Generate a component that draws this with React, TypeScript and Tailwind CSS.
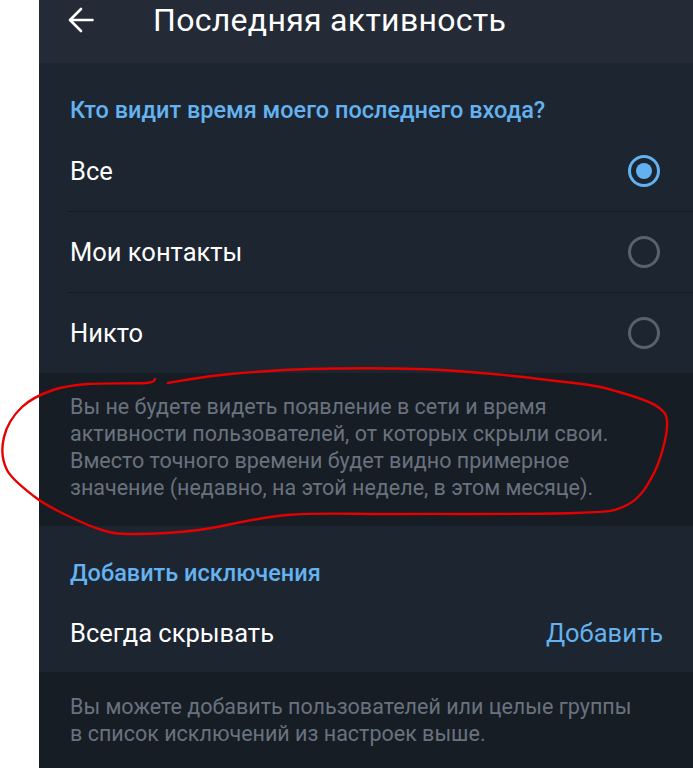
import React from 'react'

const options = [
  { label: 'Все', checked: true },
  { label: 'Мои контакты', checked: false },
  { label: 'Никто', checked: false },
]

// red hand-drawn loop around the hint text
const loop: [number, number][] = [
  [168, 383], [221, 375], [309, 369], [442, 370], [574, 383], [619, 392],
  [658, 407], [667, 427], [654, 473], [627, 505], [574, 513], [398, 514],
  [287, 515], [199, 530], [133, 534], [102, 530], [62, 513], [35, 497],
  [7, 470], [4, 437], [22, 407], [53, 390], [88, 384], [146, 383], [155, 379],
]

function smoothPath(pts: [number, number][]) {
  let d = `M${pts[0][0]},${pts[0][1]}`
  for (let i = 0; i < pts.length - 1; i++) {
    const p0 = pts[i - 1] || pts[i]
    const p1 = pts[i]
    const p2 = pts[i + 1]
    const p3 = pts[i + 2] || p2
    const c1x = p1[0] + (p2[0] - p0[0]) / 6
    const c1y = p1[1] + (p2[1] - p0[1]) / 6
    const c2x = p2[0] - (p3[0] - p1[0]) / 6
    const c2y = p2[1] - (p3[1] - p1[1]) / 6
    d += ` C${c1x},${c1y} ${c2x},${c2y} ${p2[0]},${p2[1]}`
  }
  return d
}

function Radio({ checked }: { checked: boolean }) {
  if (checked) {
    return (
      <div className="w-[32px] h-[32px] rounded-full border-[3px] border-[#62b1f0] flex items-center justify-center">
        <div className="w-[16px] h-[16px] rounded-full bg-[#62b1f0]" />
      </div>
    )
  }
  return <div className="w-[32px] h-[32px] rounded-full border-[3px] border-[#59616b]" />
}

export default function App() {
  return (
    <div
      className="relative w-[693px] h-[768px] bg-white flex overflow-hidden"
      style={{ fontFamily: 'Roboto, "Noto Sans", sans-serif' }}
    >
      <div className="w-[39px] shrink-0 bg-white" />
      <div className="flex-1 flex flex-col bg-[#171d25]">
        {/* Toolbar */}
        <div className="h-[63px] bg-[#242b37] flex items-start pt-[3px] pl-[29px]">
          <svg width="26" height="26" viewBox="0 0 26 26" className="mt-[4px]" fill="none">
            <path
              d="M24.5 13H2.5M13 2L2 13L13 24"
              stroke="white"
              strokeWidth="2.6"
              strokeLinecap="round"
              strokeLinejoin="round"
            />
          </svg>
          <h1 className="ml-[59px] text-[32px] leading-[34px] tracking-[0.3px] text-white">
            Последняя активность
          </h1>
        </div>

        {/* Who sees last seen */}
        <div className="bg-[#1d2530]">
          <div className="pt-[33px] pb-[7px] pl-[31px] text-[23.5px] leading-[28px] font-medium text-[#64b2ef]">
            Кто видит время моего последнего входа?
          </div>
          {options.map((o, i) => (
            <div key={o.label}>
              {i > 0 && <div className="ml-[29px] h-px bg-[#141a22]" />}
              <div className="h-[80px] flex items-center justify-between pl-[31px] pr-[33px]">
                <span className="text-[25.5px] text-white">{o.label}</span>
                <Radio checked={o.checked} />
              </div>
            </div>
          ))}
        </div>

        <div className="pt-[20px] pb-[25px] pl-[31px] pr-[10px] text-[21.5px] leading-[27px] text-[#69727e] whitespace-nowrap">
          Вы не будете видеть появление в сети и время
          <br />
          активности пользователей, от которых скрыли свои.
          <br />
          Вместо точного времени будет видно примерное
          <br />
          значение (недавно, на этой неделе, в этом месяце).
        </div>

        {/* Exceptions */}
        <div className="bg-[#1d2530]">
          <div className="pt-[33px] pb-[7px] pl-[31px] text-[23.5px] leading-[28px] font-medium text-[#64b2ef]">
            Добавить исключения
          </div>
          <div className="h-[78px] flex items-center justify-between pl-[31px] pr-[30px]">
            <span className="text-[25.5px] text-white">Всегда скрывать</span>
            <span className="text-[25.5px] text-[#64b2ef]">Добавить</span>
          </div>
        </div>

        <div className="pt-[21px] pl-[31px] pr-[10px] text-[21.5px] leading-[27px] text-[#69727e] whitespace-nowrap">
          Вы можете добавить пользователей или целые группы
          <br />
          в список исключений из настроек выше.
        </div>
      </div>

      <svg className="absolute inset-0 pointer-events-none" width="693" height="768">
        <path
          d={smoothPath(loop)}
          fill="none"
          stroke="#e60000"
          strokeWidth="2.4"
          strokeLinecap="round"
          strokeLinejoin="round"
        />
      </svg>
    </div>
  )
}
